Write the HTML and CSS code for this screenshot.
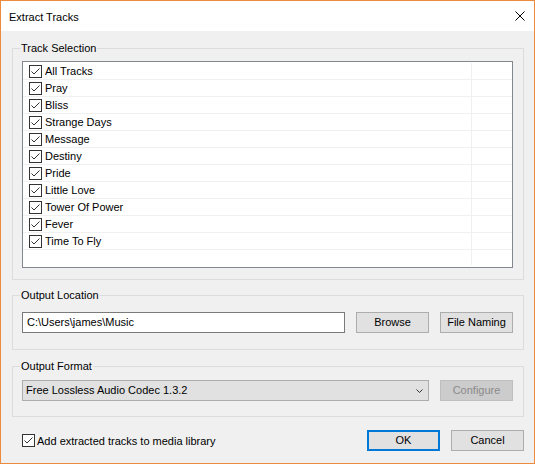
FILE: index.html
```html
<!DOCTYPE html>
<html>
<head>
<meta charset="utf-8">
<link rel="stylesheet" href="styles.css">
</head>
<body>
<div class="window">
  <div class="titlebar">
    <span class="title">Extract Tracks</span>
    <svg class="close" width="10" height="10" viewBox="0 0 10 10"><path d="M0.5 0.5 L9.5 9.5 M9.5 0.5 L0.5 9.5" stroke="#000" stroke-width="1" fill="none"/></svg>
  </div>
  <div class="content">
    <fieldset class="group group-tracks">
      <legend class="legend">Track Selection</legend>
      <div class="group-body body-tracks">
        <div class="list">
          <div class="row"><div class="cell-name"><span class="check"><svg width="13" height="13" viewBox="0 0 13 13"><rect x="0.5" y="0.5" width="12" height="12" fill="#fff" stroke="#333"/><polyline points="2.5,6.5 5,9 10.5,3.5" fill="none" stroke="#333" stroke-width="1"/></svg></span><span class="label">All Tracks</span></div><div class="cell-extra"></div></div>
          <div class="row"><div class="cell-name"><span class="check"><svg width="13" height="13" viewBox="0 0 13 13"><rect x="0.5" y="0.5" width="12" height="12" fill="#fff" stroke="#333"/><polyline points="2.5,6.5 5,9 10.5,3.5" fill="none" stroke="#333" stroke-width="1"/></svg></span><span class="label">Pray</span></div><div class="cell-extra"></div></div>
          <div class="row"><div class="cell-name"><span class="check"><svg width="13" height="13" viewBox="0 0 13 13"><rect x="0.5" y="0.5" width="12" height="12" fill="#fff" stroke="#333"/><polyline points="2.5,6.5 5,9 10.5,3.5" fill="none" stroke="#333" stroke-width="1"/></svg></span><span class="label">Bliss</span></div><div class="cell-extra"></div></div>
          <div class="row"><div class="cell-name"><span class="check"><svg width="13" height="13" viewBox="0 0 13 13"><rect x="0.5" y="0.5" width="12" height="12" fill="#fff" stroke="#333"/><polyline points="2.5,6.5 5,9 10.5,3.5" fill="none" stroke="#333" stroke-width="1"/></svg></span><span class="label">Strange Days</span></div><div class="cell-extra"></div></div>
          <div class="row"><div class="cell-name"><span class="check"><svg width="13" height="13" viewBox="0 0 13 13"><rect x="0.5" y="0.5" width="12" height="12" fill="#fff" stroke="#333"/><polyline points="2.5,6.5 5,9 10.5,3.5" fill="none" stroke="#333" stroke-width="1"/></svg></span><span class="label">Message</span></div><div class="cell-extra"></div></div>
          <div class="row"><div class="cell-name"><span class="check"><svg width="13" height="13" viewBox="0 0 13 13"><rect x="0.5" y="0.5" width="12" height="12" fill="#fff" stroke="#333"/><polyline points="2.5,6.5 5,9 10.5,3.5" fill="none" stroke="#333" stroke-width="1"/></svg></span><span class="label">Destiny</span></div><div class="cell-extra"></div></div>
          <div class="row"><div class="cell-name"><span class="check"><svg width="13" height="13" viewBox="0 0 13 13"><rect x="0.5" y="0.5" width="12" height="12" fill="#fff" stroke="#333"/><polyline points="2.5,6.5 5,9 10.5,3.5" fill="none" stroke="#333" stroke-width="1"/></svg></span><span class="label">Pride</span></div><div class="cell-extra"></div></div>
          <div class="row"><div class="cell-name"><span class="check"><svg width="13" height="13" viewBox="0 0 13 13"><rect x="0.5" y="0.5" width="12" height="12" fill="#fff" stroke="#333"/><polyline points="2.5,6.5 5,9 10.5,3.5" fill="none" stroke="#333" stroke-width="1"/></svg></span><span class="label">Little Love</span></div><div class="cell-extra"></div></div>
          <div class="row"><div class="cell-name"><span class="check"><svg width="13" height="13" viewBox="0 0 13 13"><rect x="0.5" y="0.5" width="12" height="12" fill="#fff" stroke="#333"/><polyline points="2.5,6.5 5,9 10.5,3.5" fill="none" stroke="#333" stroke-width="1"/></svg></span><span class="label">Tower Of Power</span></div><div class="cell-extra"></div></div>
          <div class="row"><div class="cell-name"><span class="check"><svg width="13" height="13" viewBox="0 0 13 13"><rect x="0.5" y="0.5" width="12" height="12" fill="#fff" stroke="#333"/><polyline points="2.5,6.5 5,9 10.5,3.5" fill="none" stroke="#333" stroke-width="1"/></svg></span><span class="label">Fever</span></div><div class="cell-extra"></div></div>
          <div class="row"><div class="cell-name"><span class="check"><svg width="13" height="13" viewBox="0 0 13 13"><rect x="0.5" y="0.5" width="12" height="12" fill="#fff" stroke="#333"/><polyline points="2.5,6.5 5,9 10.5,3.5" fill="none" stroke="#333" stroke-width="1"/></svg></span><span class="label">Time To Fly</span></div><div class="cell-extra"></div></div>
          <div class="filler"><div class="cell-name"></div><div class="cell-extra"></div></div>
        </div>
      </div>
    </fieldset>

    <fieldset class="group group-location">
      <legend class="legend">Output Location</legend>
      <div class="group-body body-location">
        <div class="textbox">C:\Users\james\Music</div>
        <div class="button">Browse</div>
        <div class="button">File Naming</div>
      </div>
    </fieldset>

    <fieldset class="group group-format">
      <legend class="legend">Output Format</legend>
      <div class="group-body body-format">
        <div class="combo"><span class="combo-text">Free Lossless Audio Codec 1.3.2</span><svg class="chevron" width="7" height="4" viewBox="0 0 7 4"><polyline points="0.5,0.5 3.5,3.5 6.5,0.5" fill="none" stroke="#333" stroke-width="1"/></svg></div>
        <div class="button button-disabled">Configure</div>
      </div>
    </fieldset>

    <div class="footer">
      <div class="footer-check">
        <span class="check"><svg width="13" height="13" viewBox="0 0 13 13"><rect x="0.5" y="0.5" width="12" height="12" fill="#fff" stroke="#333"/><polyline points="2.5,6.5 5,9 10.5,3.5" fill="none" stroke="#333" stroke-width="1"/></svg></span>
        <span class="footer-label">Add extracted tracks to media library</span>
      </div>
      <div class="footer-buttons">
        <div class="button button-default">OK</div>
        <div class="button">Cancel</div>
      </div>
    </div>
  </div>
</div>
</body>
</html>
```

FILE: styles.css
```css
* { box-sizing: border-box; }

html, body {
  margin: 0;
  padding: 0;
  background: #f0f0f0;
}

body {
  font-family: "Liberation Sans", Arial, sans-serif;
  font-size: 11px;
  color: #000;
}

.window {
  width: 535px;
  height: 464px;
  border: 1px solid #ec8a3e;
  background: #f0f0f0;
  display: flex;
  flex-direction: column;
}

.titlebar {
  height: 30px;
  flex: none;
  background: #fff;
  display: flex;
  align-items: center;
  justify-content: space-between;
  padding: 0 9px 0 8px;
}

.title {
  font-size: 11px;
  line-height: 14px;
  padding-top: 1px;
}

.close {
  display: block;
}

.content {
  flex: 1;
  display: flex;
  flex-direction: column;
  padding: 9px 10px 0 11px;
}

.group {
  margin: 0;
  padding: 0;
  border: 1px solid #dcdcdc;
  min-width: 0;
}

.legend {
  margin-left: 7px;
  padding: 0 1px;
  line-height: 17px;
  height: 17px;
}

.group-body {
  padding-left: 9px;
  padding-right: 10px;
}

.body-tracks {
  padding-top: 4px;
  padding-bottom: 11px;
}

.list {
  height: 207px;
  border: 1px solid #828790;
  background: #fff;
  display: flex;
  flex-direction: column;
  padding-top: 1px;
}

.row {
  flex: none;
  height: 17px;
  border-bottom: 1px solid #f0f0f0;
  display: flex;
}

.filler {
  flex: 1;
  display: flex;
  margin-bottom: 2px;
}

.cell-name {
  width: 449px;
  border-right: 1px solid #f0f0f0;
  display: flex;
  align-items: center;
  padding-left: 6px;
}

.cell-extra {
  flex: 1;
}

.check {
  width: 13px;
  height: 13px;
  flex: none;
  display: block;
}

.check svg {
  display: block;
}

.label {
  margin-left: 3px;
  line-height: 16px;
}

.group-location {
  margin-top: 7px;
}

.body-location {
  padding-top: 8px;
  padding-bottom: 16px;
  display: flex;
  gap: 11px;
}

.textbox {
  width: 323px;
  height: 21px;
  border: 1px solid #7a7a7a;
  background: #fff;
  padding-left: 4px;
  line-height: 19px;
}

.button {
  width: 73px;
  height: 21px;
  border: 1px solid #adadad;
  background: #e1e1e1;
  text-align: center;
  line-height: 19px;
  flex: none;
}

.button-disabled {
  background: #cccccc;
  border-color: #bfbfbf;
  color: #8a8a8a;
}

.button-default {
  border: 2px solid #0078d7;
  line-height: 17px;
}

.group-format {
  margin-top: 8px;
}

.body-format {
  padding-top: 5px;
  padding-bottom: 15px;
  display: flex;
  gap: 11px;
}

.combo {
  width: 407px;
  height: 21px;
  border: 1px solid #adadad;
  background: #e1e1e1;
  display: flex;
  align-items: center;
  justify-content: space-between;
  padding: 0 5px 0 3px;
}

.combo-text {
  line-height: 19px;
}

.chevron {
  display: block;
}

.footer {
  margin-top: 13px;
  display: flex;
  align-items: center;
  justify-content: space-between;
  padding-left: 10px;
}

.footer-check {
  display: flex;
  align-items: center;
}

.footer-label {
  margin-left: 2px;
  line-height: 16px;
}

.footer-buttons {
  display: flex;
  gap: 11px;
}
```
